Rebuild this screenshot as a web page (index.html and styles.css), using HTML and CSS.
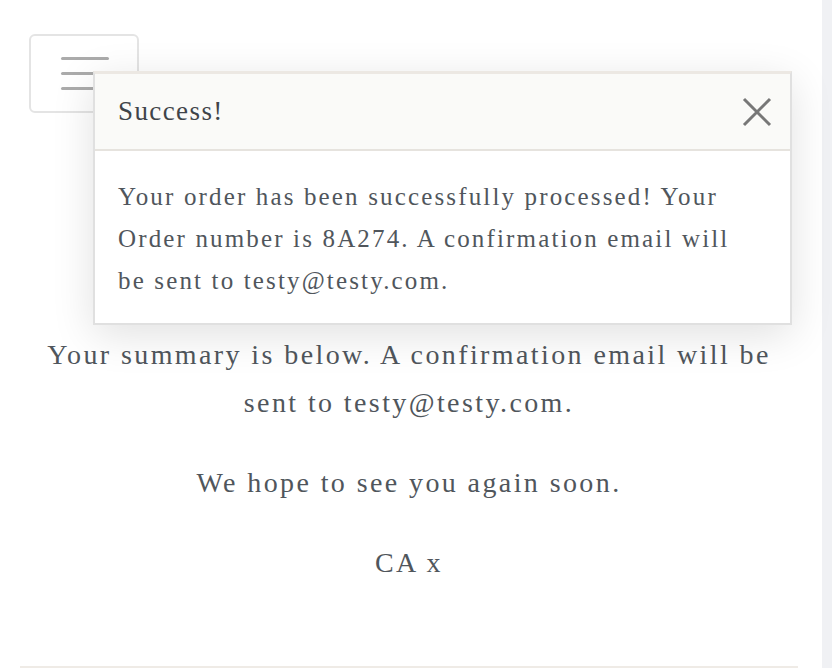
FILE: index.html
```html
<!DOCTYPE html>
<html lang="en">
<head>
<meta charset="utf-8">
<title>Order confirmation</title>
<link rel="stylesheet" href="styles.css">
</head>
<body>
<div class="page">
  <div class="main">
    <header class="nav">
      <button class="menu-btn" aria-label="Menu">
        <span class="bar"></span>
        <span class="bar"></span>
        <span class="bar"></span>
      </button>
    </header>
    <section class="content">
      <p class="para">Your summary is below. A confirmation email will be sent to testy@testy.com.</p>
      <p class="para">We hope to see you again soon.</p>
      <p class="para">CA x</p>
      <div class="rule"></div>
    </section>
    <div class="toast" role="alert">
      <div class="toast-header">
        <span class="toast-title">Success!</span>
        <button class="toast-close" aria-label="Close">
          <svg width="30" height="30" viewBox="0 0 30 30"><path d="M2 2 L28 28 M28 2 L2 28" stroke="#777" stroke-width="3" fill="none"/></svg>
        </button>
      </div>
      <div class="toast-body">Your order has been successfully processed! Your Order number is 8A274. A confirmation email will be sent to testy@testy.com.</div>
    </div>
  </div>
  <div class="side"></div>
</div>
</body>
</html>
```
FILE: styles.css
```css
* { box-sizing: border-box; }
html, body { margin: 0; padding: 0; }
body {
  font-family: "Liberation Serif", "Times New Roman", serif;
  color: #50565c;
  background: #fff;
}
.page {
  display: flex;
  width: 832px;
  height: 668px;
  overflow: hidden;
}
.main {
  position: relative;
  width: 822px;
  background: #fff;
}
.side {
  width: 10px;
  background: #f0f1f4;
}
.nav {
  padding: 34px 0 0 29px;
}
.menu-btn {
  width: 110px;
  height: 79px;
  border: 2px solid #e4e4e4;
  border-radius: 6px;
  background: #fff;
  display: flex;
  flex-direction: column;
  align-items: center;
  justify-content: center;
  gap: 12px;
  padding: 0 0 0 1px;
}
.bar {
  display: block;
  width: 48px;
  height: 3px;
  border-radius: 2px;
  background: #ababab;
}
.content {
  margin: 218px 24px 0 20px;
  text-align: center;
}
.para {
  margin: 0 0 32px;
  font-size: 28px;
  line-height: 48px;
  letter-spacing: 2.4px;
  padding: 0 22px;
}
.rule {
  margin-top: 79px;
  border-top: 2px solid #efebe6;
}
.toast {
  position: absolute;
  left: 93px;
  top: 71px;
  width: 699px;
  background: #fff;
  border: 2px solid #e0e0e0;
  border-top: 3px solid #ece8e3;
  box-shadow: 0 10px 40px rgba(0, 0, 0, 0.12);
}
.toast-header {
  display: flex;
  align-items: center;
  justify-content: space-between;
  height: 77px;
  padding: 0 18px 0 23px;
  background: #fafaf8;
  border-bottom: 2px solid #e6e3de;
}
.toast-title {
  font-size: 27px;
  letter-spacing: 1.4px;
  color: #3f4449;
}
.toast-close {
  border: 0;
  background: transparent;
  padding: 0;
  width: 30px;
  height: 30px;
  display: flex;
}
.toast-body {
  padding: 25px 26px 21px 23px;
  font-size: 25px;
  line-height: 42px;
  letter-spacing: 2.15px;
}
```
